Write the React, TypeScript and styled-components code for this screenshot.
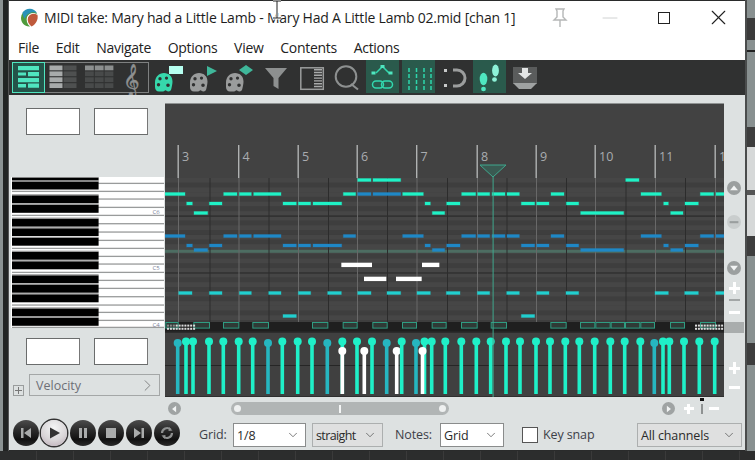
import React from "react";
import styled, { createGlobalStyle } from "styled-components";
import { ChevronDown, ChevronRight, Minus, X } from "lucide-react";

const Global = createGlobalStyle`
  html, body { margin: 0; padding: 0; background: #2a2b2b; }
  * { box-sizing: border-box; }
`;

const UI = `"Open Sans", "Noto Sans", "Liberation Sans", sans-serif`;

const Desktop = styled.div`
  width: 755px; height: 460px; overflow: hidden; position: relative;
  background: #2a2b2b; display: flex; flex-direction: column;
`;
const DesktopRow = styled.div`display: flex; height: 451px;`;
const LeftEdge = styled.div`
  width: 9px;
  background: linear-gradient(90deg, #8b9292 0 3px, #222423 3px 8px, #555 8px);
`;
const RightEdge = styled.div`
  width: 10px; border-left: 2px solid #4a4c4c;
  background: linear-gradient(180deg,
    #889090 0 18px, #3b3b3b 18px 40px, #889090 40px 50px, #222 50px 52px,
    #889090 52px 127px, #3d3d3d 127px 147px, #d6d8d8 147px 190px, #555 190px 195px,
    #d6d8d8 195px 236px, #3d3d3d 236px 256px, #889090 256px 343px,
    #3d3d3d 343px 365px, #889090 365px);
`;
const BottomEdge = styled.div`
  flex: 1;
  background: repeating-linear-gradient(90deg, #2c2d2d 0 36px, #3a3a3a 36px 37px);
`;
const Win = styled.div`
  width: 736px; margin-top: 1px; height: 449px; display: flex; flex-direction: column;
  background: #dde1e1; font-family: ${UI}; color: #222;
`;
const TitleBar = styled.div`
  height: 33px; background: #fff; display: flex; align-items: center;
  padding-left: 11px; font-size: 14px; color: #1d1d1d; flex: none;
`;
const TitleText = styled.span`margin-left: 5px; width: 501px; flex: none; white-space: nowrap; letter-spacing: -0.21px;`;
const WinBtn = styled.div<{ $w: number; $c?: string; $ml?: number }>`
  width: ${p => p.$w}px; flex: none; margin-left: ${p => p.$ml || 0}px;
  display: flex; align-items: center; justify-content: center;
  color: ${p => p.$c || "#222"};
`;
const MaxBox = styled.div`width: 12px; height: 12px; border: 1.4px solid #222;`;
const MenuBar = styled.div`
  height: 26px; background: #fff; display: flex; align-items: center; flex: none;
  padding-left: 9px; font-size: 14px; gap: 16.7px; color: #222; letter-spacing: -0.02em;
`;
const ToolBar = styled.div`
  height: 35px; background: #303131; flex: none; display: flex; align-items: stretch; position: relative;
`;
const ToolSvg = styled.svg`display: block;`;
const Body = styled.div`flex: 1; display: flex; flex-direction: column; padding-top: 8px;`;
const Upper = styled.div`display: flex; height: 294px; flex: none;`;
const LeftCol = styled.div`width: 156px; flex: none; display: flex; flex-direction: column; padding-left: 3px;`;
const BoxRow = styled.div<{ $mt: number }>`
  display: flex; gap: 14px; margin-top: ${p => p.$mt}px; padding-left: 14px;
`;
const WhiteBox = styled.div`
  width: 54px; height: 27px; background: #fff; border: 1px solid #6a6c6c; border-right-color: #777;
`;
const KeysSvg = styled.svg`display: block; margin: 42px 0 0 -1px;`;
const VelRow = styled.div`display: flex; align-items: flex-end; margin-top: 9px; padding-left: 1px;`;
const PlusBox = styled.div`
  width: 11px; height: 11px; border: 1px solid #9a9d9d; position: relative; margin-right: 5px;
  &::before { content: ""; position: absolute; left: 1px; right: 1px; top: 4px; height: 1px; background: #777; }
  &::after { content: ""; position: absolute; top: 1px; bottom: 1px; left: 4px; width: 1px; background: #777; }
`;
const VelSelect = styled.div`
  width: 131px; height: 22px; border: 1px solid #a4a7a7; display: flex; align-items: center;
  justify-content: space-between; padding: 0 2px 0 6px; font-size: 12.5px; color: #6d6f76;
`;
const RollSvg = styled.svg`display: block; flex: none;`;
const Rail = styled.div`width: 21px; flex: none; display: flex; flex-direction: column; align-items: center; padding-right: 1px;`;
const RailCircle = styled.div<{ $mt: number; $light?: boolean }>`
  width: 14px; height: 14px; border-radius: 50%; margin-top: ${p => p.$mt}px;
  background: ${p => (p.$light ? "#c9cdcd" : "#9b9f9f")};
  display: flex; align-items: center; justify-content: center;
`;
const PlusMark = styled.div<{ $mt: number }>`
  width: 11px; height: 12px; margin-top: ${p => p.$mt}px; position: relative;
  &::before { content: ""; position: absolute; left: 0; right: 0; top: 4.5px; height: 3px; background: #fff; }
  &::after { content: ""; position: absolute; top: 0; bottom: 0; left: 4px; width: 3px; background: #fff; }
`;
const DashMark = styled.div<{ $mt: number; $grey?: boolean }>`
  width: 11px; height: ${p => (p.$grey ? 2 : 3)}px; margin-top: ${p => p.$mt}px;
  background: ${p => (p.$grey ? "#a2a6a6" : "#fff")};
`;
const GreyBlock = styled.div<{ $mt: number }>`width: 20px; height: 11px; margin-top: ${p => p.$mt}px; background: #a9adad;`;

const ScrollRow = styled.div`height: 23px; flex: none; display: flex; align-items: center; padding-left: 159px; position: relative;`;
const ScrollBtn = styled.div<{ $ml: number }>`
  width: 13px; height: 13px; border-radius: 50%; background: #9fa3a3; margin-left: ${p => p.$ml}px;
  flex: none; display: flex; align-items: center; justify-content: center;
`;
const Track = styled.div`
  width: 218px; height: 13px; margin-left: 50px; border-radius: 7px; background: #b1b5b5; position: relative; flex: none;
  display: flex; align-items: center; justify-content: space-between; padding: 0 3px;
`;
const TrackDot = styled.span`width: 7px; height: 7px; border-radius: 50%; background: #eef0f0;`;
const TrackThumb = styled.span`width: 2px; height: 8px; background: #f4f6f6; position: absolute; left: 108px; top: 3px;`;
const ZoomPlus = styled.div`
  width: 10px; height: 10px; margin-left: 8.5px; position: relative; flex: none;
  &::before { content: ""; position: absolute; left: 0; right: 0; top: 3.5px; height: 3px; background: #fff; }
  &::after { content: ""; position: absolute; top: 0; bottom: 0; left: 3.5px; width: 3px; background: #fff; }
`;
const ZoomTick = styled.div`width: 2px; height: 10px; background: #8e9292; margin-left: 7px; flex: none; position: relative;
  &::before { content: ""; position: absolute; left: -1px; top: -6px; width: 4px; height: 3px; background: #111; }
`;
const ZoomMinus = styled.div`width: 10px; height: 3px; background: #fff; margin-left: 6px; flex: none;`;

const Controls = styled.div`flex: 1; display: flex; align-items: flex-start; padding: 3px 0 0 4px; font-size: 12.5px; color: #3c4048; position: relative;`;
const Transport = styled.div`display: flex; gap: 2.3px; width: 171px; flex: none; margin-top: -3px;`;
const TBtn = styled.div<{ $on?: boolean }>`
  width: 26px; height: 26px; border-radius: 50%; flex: none; display: flex; align-items: center; justify-content: center;
  background: ${p => p.$on
    ? "radial-gradient(circle at 50% 30%, #f4f5f5 0, #d9d6d8 55%, #b9a8b4 100%)"
    : "linear-gradient(180deg, #4c4c4c 0, #2a2a2a 40%, #111 75%, #2a2a2a 100%)"};
  box-shadow: ${p => (p.$on ? "0 0 0 1.5px #333" : "none")};
`;
const Label = styled.span<{ $ml: number; $w: number }>`
  margin-left: ${p => p.$ml}px; width: ${p => p.$w}px; line-height: 24px; flex: none; white-space: nowrap;
  letter-spacing: -0.01em;
`;
const Select = styled.div<{ $w: number; $ml?: number; $grey?: boolean; $tight?: boolean }>`
  width: ${p => p.$w}px; height: 24px; margin-left: ${p => p.$ml || 0}px; flex: none;
  background: ${p => (p.$grey ? "#dfe0e0" : "#fff")}; border: 1px solid ${p => (p.$grey ? "#acafaf" : "#8a8c8c")};
  display: flex; align-items: center; justify-content: space-between; padding: 0 5px 0 3px;
  font-size: 12.5px; color: #2a2a2a; letter-spacing: ${p => (p.$tight ? "-0.05em" : "-0.01em")};
`;
const Check = styled.div`
  width: 16px; height: 16px; margin: 4px 0 0 18px; background: #fff; border: 1px solid #555; flex: none;
`;
const CursorWrap = styled.svg`position: absolute; left: 271px; top: 0; pointer-events: none;`;

const z4 = (x: number) => 160 + x / 3;
const z5 = (x: number) => 455 + x / 3;
type Seg = [number, number];
const sets = (f: (n: number) => number, list: Seg[]) => list.map(([a, b]) => [f(a), f(b)] as Seg);

const GREEN = "#1ff2c6", BLUE = "#1f88c6", TEAL = "#21cfcf";
const rows: { y: number; c: string; segs: Seg[] }[] = [
  { y: 180, c: GREEN, segs: [...sets(z4, [[593, 633], [639, 722]]), ...sets(z5, [[512, 552]])] },
  { y: 194, c: GREEN, segs: [...sets(z4, [[14, 75], [191, 231], [238, 274], [281, 363], [550, 587], [728, 790]]), ...sets(z5, [[20, 62], [68, 104], [111, 150], [156, 193], [288, 327], [558, 619], [736, 776], [783, 807]])] },
  { y: 194, c: BLUE, segs: sets(z4, [[593, 633], [639, 722]]) },
  { y: 203.5, c: GREEN, segs: [...sets(z4, [[80, 97], [148, 186], [369, 409], [415, 452], [459, 545], [795, 811], [860, 900]]), ...sets(z5, [[199, 239], [245, 282], [334, 371], [626, 640], [690, 730]])] },
  { y: 213, c: GREEN, segs: [...sets(z4, [[102, 143], [817, 854]]), ...sets(z5, [[377, 506], [647, 684]])] },
  { y: 236, c: BLUE, segs: [...sets(z4, [[14, 75], [191, 231], [238, 274], [281, 363], [550, 587], [728, 790]]), ...sets(z5, [[20, 62], [68, 104], [111, 150], [156, 193], [288, 327], [558, 619], [736, 776], [783, 807]])] },
  { y: 245.5, c: BLUE, segs: [...sets(z4, [[80, 97], [148, 186], [369, 409], [415, 452], [459, 545], [795, 811], [860, 900]]), ...sets(z5, [[199, 239], [245, 282], [334, 371], [626, 640], [690, 730]])] },
  { y: 250, c: BLUE, segs: [...sets(z4, [[102, 143], [817, 854]]), ...sets(z5, [[377, 506], [647, 684]])] },
  { y: 293, c: TEAL, segs: [...sets(z4, [[56, 96], [148, 186], [238, 274], [326, 363], [415, 452], [503, 544], [593, 633], [681, 722], [771, 811], [859, 900]]), ...sets(z5, [[67, 104], [155, 193], [245, 282], [333, 371], [600, 640], [689, 730], [782, 807]])] },
  { y: 316, c: TEAL, segs: [...sets(z4, [[369, 409]]), ...sets(z5, [[199, 239]])] },
];
const whites: { y: number; segs: Seg[] }[] = [
  { y: 264.7, segs: sets(z4, [[544, 636], [786, 838]]) },
  { y: 278.7, segs: sets(z4, [[612, 679], [708, 785]]) },
];
const strip: Seg[] = [
  ...sets(z4, [[16, 56], [100, 150], [189, 238], [277, 327], [456, 505], [548, 593], [637, 683], [726, 771], [815, 860]]),
  ...sets(z5, [[18, 68], [107, 156], [286, 335], [375, 421], [421, 467], [467, 510], [510, 556], [556, 600], [645, 690], [735, 783]]),
];
const stems: [number, "g" | "t" | "w"][] = [
  [177.7, "t"], [186, "g"], [193, "g"], [209, "g"], [223.3, "g"], [238.7, "g"], [252.7, "g"], [268, "t"], [282.3, "g"], [297.7, "g"], [312, "g"], [327.3, "t"],
  [342.3, "g"], [342.3, "w"], [357, "g"], [364.3, "w"], [372, "g"], [386.7, "t"], [396.7, "w"], [401.7, "g"], [416, "t"], [424.5, "g"], [422.5, "w"], [431.7, "g"],
  [445.3, "g"], [461.3, "g"], [476.3, "g"], [490.7, "g"], [506, "g"], [520, "g"], [536, "g"], [550, "g"], [565.3, "g"], [579.3, "g"], [594.7, "g"], [610.3, "g"],
  [624.7, "g"], [640.3, "g"], [654.3, "t"], [663, "g"], [669.3, "g"], [684, "g"], [699.3, "g"], [714.7, "g"],
];
const barX = [178, 238.5, 298, 357, 416.5, 477, 536, 595, 655, 715];
const beatX = [209.5, 268.5, 328, 387, 447, 506.5, 566, 625.5, 685];
const barNames = ["3", "4", "5", "6", "7", "8", "9", "10", "11", "12"];

function PianoRoll() {
  const rowH = 4.74;
  const bands = [] as React.ReactNode[];
  const blackPos = [1, 3, 6, 8, 10];
  for (let i = 0; i < 31; i++) {
    const y = 178 + i * rowH;
    const semi = ((8 - i - 1) % 12 + 12) % 12; // C at row just above the octave line
    bands.push(<rect key={i} x={165} y={y} width={559} height={rowH} fill={blackPos.includes(semi) ? "#3e3e3e" : "#464646"} />);
  }
  return (
    <RollSvg width={559} height={294} viewBox="165 103 559 294">
      <rect x={165} y={103} width={559} height={294} fill="#424242" />
      <rect x={165} y={103} width={559} height={1} fill="#8f9292" />
      {bands}
      <rect x={165} y={215.6} width={559} height={1} fill="#272727" />
      <rect x={165} y={272.5} width={559} height={1} fill="#272727" />
      <rect x={165} y={249.8} width={559} height={3} fill="#4d6d62" />
      {beatX.map(x => <rect key={x} x={x} y={178} width={1} height={144} fill="#2c2c2c" />)}
      {barX.map(x => <rect key={x} x={x} y={178} width={1} height={144} fill="#686868" />)}
      {barX.map((x, i) => (
        <g key={x}>
          <rect x={x - 0.5} y={145} width={1.4} height={33} fill="#b0b2b2" />
          <text x={x + 4} y={160.5} fontFamily={UI} fontSize={12.5} fill="#a9acb0">{barNames[i]}</text>
        </g>
      ))}
      {rows.map((r, i) => r.segs.map(([a, b]) => (
        <rect key={`${i}-${a}`} x={a} y={r.y - 1.5} width={b - a} height={3} fill={r.c} stroke={r.c} strokeOpacity={0.3} strokeWidth={1} />
      )))}
      {whites.map(r => r.segs.map(([a, b]) => (
        <rect key={`${r.y}-${a}`} x={a} y={r.y - 2} width={b - a} height={4.4} fill="#fff" />
      )))}
      <rect x={165} y={322} width={559} height={11} fill="#1f1f1f" />
      <rect x={165} y={331.5} width={559} height={1.5} fill="#2c2c2c" />
      {strip.map(([a, b]) => (
        <rect key={a} x={a + 0.5} y={322.5} width={b - a - 1} height={5.6} fill="#2f3a36" stroke="#2f9c82" strokeWidth={1} />
      ))}
      {[0, 1].map(r => Array.from({ length: 10 }).map((_, i) => (
        <React.Fragment key={`${r}-${i}`}>
          <rect x={167 + i * 2.9} y={324.6 + r * 3.2} width={2} height={2} fill={i < 3 && r === 0 ? "#888" : "#ddd"} />
          <rect x={695 + i * 2.9} y={324.6 + r * 3.2} width={2} height={2} fill="#ddd" />
        </React.Fragment>
      )))}
      <rect x={165} y={333} width={559} height={63} fill="#404040" />
      <rect x={165} y={365} width={559} height={1} fill="#262626" />
      <rect x={165} y={396} width={559} height={1.2} fill="#2f2f2f" />
      {stems.map(([x, k], i) => {
        const color = k === "g" ? "#1ff0c8" : k === "t" ? "#26b6c0" : "#ffffff";
        const top = k === "g" ? 341.5 : k === "t" ? 343 : 351;
        return (
          <g key={i}>
            <rect x={x - 1.8} y={top} width={3.6} height={394 - top} fill={color} />
            <circle cx={x} cy={top} r={4} fill={color} />
          </g>
        );
      })}
      <path d="M480 165 H506 L493 177 Z" fill="#3a5a52" stroke="#3fa78d" strokeWidth={1} />
      <rect x={492.6} y={177} width={1} height={220} fill="#3fa78d" />
    </RollSvg>
  );
}

function Keyboard() {
  const lines = [250, 274, 297, 322, 346, 371, 396, 421, 445, 469, 492, 517, 541, 565, 590, 615, 637, 661, 682].map(v => 100 + v / 3);
  const blacks: Seg[] = [[177.5, 180.5], [181.5, 189.5], [195.3, 203.3], [204.8, 212.8], [218.6, 226.6], [228.3, 236], [237.7, 245.7], [251.7, 259.7], [261.3, 269.3], [275.3, 283.3], [285, 292.7], [294.3, 302.3], [308.4, 316.4], [317.8, 325.8]];
  return (
    <KeysSvg width={153} height={152} viewBox="11 177 153 152">
      <rect x={11} y={177} width={153} height={151} fill="#fff" />
      {lines.map(y => <rect key={y} x={12} y={y - 0.6} width={152} height={1.3} fill="#999b9b" />)}
      {blacks.map(([a, b]) => <rect key={a} x={12} y={a} width={86.6} height={b - a} fill="#000" />)}
      {blacks.map(([a]) => <rect key={`e${a}`} x={12} y={a - 1} width={86.6} height={1} fill="#8a8a8a" />)}
      <text x={152.5} y={213.5} fontFamily={UI} fontSize={6} fill="#7b7f99">C6</text>
      <text x={152.5} y={270} fontFamily={UI} fontSize={6} fill="#7b7f99">C5</text>
      <text x={152.5} y={326.5} fontFamily={UI} fontSize={6} fill="#7b7f99">C4</text>
    </KeysSvg>
  );
}

const MINT = "#4fe6c0";
const palette = (fill: string) => (
  <path fillRule="evenodd" d="M0 9.5C0 4 4 0 9 0c5 0 8.5 3.5 8.5 8.5 0 2.5-.6 4.5-1.2 7.5-.3 1.5-1.3 2.5-2.8 2.5-1.8 0-2-1-2.8-1.2-1-.2-1 1.2-2.7 1.2H4c-2.5 0-4-2-4-4.5zM5 4a1.7 1.7 0 100 3.4A1.7 1.7 0 005 4zm6.5-.5a1.6 1.6 0 100 3.2 1.6 1.6 0 000-3.2zM3.5 10a1.7 1.7 0 100 3.4 1.7 1.7 0 000-3.4zm9.5.5a1.8 1.8 0 100 3.6 1.8 1.8 0 000-3.6z" fill={fill} />
);

function Toolbar() {
  const grid = (x0: number, cols: number, first: boolean) => {
    const out = [] as React.ReactNode[];
    const cw = cols === 2 ? 13 : 8.8;
    for (let r = 0; r < 4; r++) for (let c = 0; c < cols; c++) {
      const on = cols === 2 ? c === 0 : r === 0;
      out.push(<rect key={`${x0}-${r}-${c}`} x={x0 + c * (cw + 1)} y={65.5 + r * 5.9} width={cw} height={4.8} fill={on ? (cols === 2 ? "#a8abab" : "#8c8f8f") : (first ? "#4e5050" : "#484a4a")} />);
    }
    return out;
  };
  return (
    <ToolSvg width={736} height={35} viewBox="9 60 736 35">
      <rect x={12.5} y={62.5} width={136} height={30} fill="none" stroke="#7e8080" />
      <rect x={12.5} y={62.5} width={32} height={30} fill="#24544a" stroke={MINT} />
      <path d="M18 66h21v4.3H18zM28 72h11v4.3H28zM18 72.5h8v3H18zM18 78h21v4.3H18zM28 83.5h11v4.3H28zM18 84h8v3.6H18z" fill={MINT} />
      {grid(49.5, 2, true)}
      {grid(85, 3, false)}
      <text x={122.5} y={89} fontFamily='"DejaVu Sans", sans-serif' fontSize={28} fill="#8f9191" stroke="#8f9191" strokeWidth={0.4}>𝄞</text>
      <g transform="translate(155 73)">{palette("#36d8ac")}</g>
      <rect x={169} y={66} width={14} height={8} fill="#b6fff0" />
      <g transform="translate(190 73)">{palette("#9a9c9c")}</g>
      <path d="M207 66l10 5-10 5z" fill="#3fb79a" />
      <g transform="translate(226 73)">{palette("#9a9c9c")}</g>
      <path d="M246 65l7 5-7 5-7-5z" fill="#3fb79a" />
      <path d="M265 68h22l-8.5 10v11l-5-3v-8z" fill="#8d9090" />
      <rect x={300.8} y={67.8} width={22.5} height={21.5} fill="none" stroke="#9a9c9c" strokeWidth={1.5} />
      <path d="M314 69h8v1.4h-8zM314 71.8h8v1.4h-8zM314 74.6h8V76h-8zM314 77.4h8v1.4h-8zM314 80.2h8v1.4h-8zM314 83h8v1.4h-8zM314 85.8h8v1.4h-8z" fill="#a9abab" />
      <circle cx={346} cy={76.5} r={10.3} fill="none" stroke="#8d9090" strokeWidth={2} />
      <path d="M351 84l7 5.5" stroke="#8d9090" strokeWidth={2} fill="none" />
      <rect x={366} y={60} width={33} height={33} fill="#2a5a4c" />
      <path d="M376 73l6.5-6.5 6.5 6.5" fill="none" stroke="#32d8ae" strokeWidth={1.5} />
      <rect x={371.5} y={71.5} width={4} height={3} fill={MINT} />
      <rect x={388.5} y={71.5} width={4} height={3} fill={MINT} />
      <rect x={380.5} y={65} width={4} height={3} fill={MINT} />
      <rect x={372.5} y={81} width={11} height={7} rx={3.5} fill="none" stroke="#32d8ae" strokeWidth={1.5} />
      <rect x={381.5} y={81} width={11} height={7} rx={3.5} fill="none" stroke="#32d8ae" strokeWidth={1.5} />
      <rect x={402} y={60} width={33} height={33} fill="#2a5a4c" />
      {[409, 416.5, 424, 431].map(x => [68, 74, 80, 86].map(y => <rect key={`${x}${y}`} x={x - 0.75} y={y} width={1.5} height={4} fill="#2ed6ac" />))}
      <path d="M453 70h4a8 8 0 010 16h-4" fill="none" stroke="#9b9d9d" strokeWidth={3} />
      <rect x={444} y={69} width={3} height={3} fill="#c8caca" />
      <rect x={444} y={84} width={3} height={3} fill="#c8caca" />
      <rect x={473} y={60} width={33} height={33} fill="#2a5a4c" />
      <ellipse cx={483.5} cy={79} rx={3.8} ry={6.2} fill={MINT} />
      <ellipse cx={483.5} cy={89} rx={2.4} ry={2.3} fill={MINT} />
      <ellipse cx={495.5} cy={70.5} rx={3.4} ry={6} fill="#8ef2d8" />
      <ellipse cx={494.5} cy={79.5} rx={2.4} ry={2.3} fill="#8ef2d8" />
      <rect x={513} y={67} width={24} height={17} fill="#5a5c5c" />
      <path d="M522 68h6v5h4l-7 6-7-6h4z" fill="#e3e5e5" />
      <path d="M513 83h24l-6 6h-12z" fill="#9fa2a2" />
    </ToolSvg>
  );
}

const Glyph = styled.svg`display: block;`;
const TIcon = ({ d, c = "#a9abab" }: { d: string; c?: string }) => (
  <Glyph width={16} height={16} viewBox="0 0 16 16"><path d={d} fill={c} /></Glyph>
);

function Logo() {
  return (
    <Glyph width={19} height={20} viewBox="0 0 19 20">
      <path d="M1 10A8.5 8.5 0 0 1 9 1.5c4 0 7 2 8.5 5C14 4 9 4.5 7 9c-1 3 0 7 3 9.5C5 19 1 15 1 10z" fill="#4f9a3c" />
      <path d="M2.5 4.5A8.5 8.5 0 0 1 17 5c-2-1-5-1.5-8 .5C6 7 5.5 9 5 11 3.5 9 2.5 7 2.5 4.5z" fill="#2a92b8" />
      <path d="M8 9.5c2-4 6-4.5 9.5-2.5.8 4-1 9-6 11.5C8.5 16 7 13 8 9.5z" fill="#bf5a3c" />
    </Glyph>
  );
}

export default function App() {
  return (
    <>
      <Global />
      <Desktop>
        <DesktopRow>
          <LeftEdge />
          <Win>
            <TitleBar>
              <Logo />
              <TitleText>MIDI take: Mary had a Little Lamb - Mary Had A Little Lamb 02.mid [chan 1]</TitleText>
              <WinBtn $w={30}>
                <Glyph width={20} height={22} viewBox="0 0 20 22">
                  <path d="M6 2h8l-1 2v6l3 3H4l3-3V4zM10 13v7" fill="none" stroke="#b5b7b7" strokeWidth={1.4} />
                </Glyph>
              </WinBtn>
              <WinBtn $w={70} $c="#d0d2d2"><Minus size={24} strokeWidth={1} /></WinBtn>
              <WinBtn $w={38}><MaxBox /></WinBtn>
              <WinBtn $w={44} $ml={13}><X size={25} strokeWidth={1.1} /></WinBtn>
            </TitleBar>
            <MenuBar>
              <span>File</span><span>Edit</span><span>Navigate</span><span>Options</span><span>View</span><span>Contents</span><span>Actions</span>
            </MenuBar>
            <ToolBar><Toolbar /></ToolBar>
            <Body>
              <Upper>
                <LeftCol>
                  <BoxRow $mt={5}><WhiteBox /><WhiteBox /></BoxRow>
                  <Keyboard />
                  <BoxRow $mt={9}><WhiteBox /><WhiteBox /></BoxRow>
                  <VelRow>
                    <PlusBox />
                    <VelSelect>Velocity<ChevronRight size={19} color="#7d7f7f" strokeWidth={1.2} /></VelSelect>
                  </VelRow>
                </LeftCol>
                <PianoRoll />
                <Rail>
                  <RailCircle $mt={78}><TIcon d="M3.5 10.5L8 5l4.5 5.5z" c="#f2f4f4" /></RailCircle>
                  <RailCircle $mt={20} $light><TIcon d="M3 7h10v2.4H3z" c="#9a9e9e" /></RailCircle>
                  <RailCircle $mt={32}><TIcon d="M3.5 5.5L8 11l4.5-5.5z" c="#f2f4f4" /></RailCircle>
                  <PlusMark $mt={7} />
                  <DashMark $mt={5} $grey />
                  <DashMark $mt={10} />
                  <GreyBlock $mt={8} />
                  <PlusMark $mt={29} />
                  <DashMark $mt={12} />
                </Rail>
              </Upper>
              <ScrollRow>
                <ScrollBtn $ml={0}><TIcon d="M10 4v8L5 8z" c="#f2f4f4" /></ScrollBtn>
                <Track><TrackDot /><TrackThumb /><TrackDot /></Track>
                <ScrollBtn $ml={213}><TIcon d="M6 4v8l5-4z" c="#f2f4f4" /></ScrollBtn>
                <ZoomPlus />
                <ZoomTick />
                <ZoomMinus />
              </ScrollRow>
              <Controls>
                <Transport>
                  <TBtn><TIcon d="M3 3h2.5v10H3zM13 3v10L6 8z" /></TBtn>
                  <TBtn $on><TIcon d="M4 2.5L14 8 4 13.5z" c="#333" /></TBtn>
                  <TBtn><TIcon d="M4 3h3v10H4zM9 3h3v10H9z" /></TBtn>
                  <TBtn><TIcon d="M3 3h10v10H3z" /></TBtn>
                  <TBtn><TIcon d="M3 3v10l7-5zM10.5 3H13v10h-2.5z" /></TBtn>
                  <TBtn><Glyph width={16} height={16} viewBox="0 0 16 16"><path d="M3 8a5 5 0 0 1 8.5-3.5M13 8a5 5 0 0 1-8.5 3.5" fill="none" stroke="#8e9090" strokeWidth={2.2} /><path d="M10 2l3.5 3.5L9.5 6zM6 14l-3.5-3.5L6.5 10z" fill="#8e9090" /></Glyph></TBtn>
                </Transport>
                <Label $ml={15} $w={34}>Grid:</Label>
                <Select $w={73}>1/8<ChevronDown size={14} color="#555" strokeWidth={1.3} /></Select>
                <Select $w={71} $ml={6} $grey $tight>straight<ChevronDown size={14} color="#555" strokeWidth={1.3} /></Select>
                <Label $ml={12} $w={45}>Notes:</Label>
                <Select $w={64}>Grid<ChevronDown size={14} color="#555" strokeWidth={1.3} /></Select>
                <Check />
                <Label $ml={5} $w={94}>Key snap</Label>
                <Select $w={105} $grey>All channels<ChevronDown size={14} color="#555" strokeWidth={1.3} /></Select>
              </Controls>
            </Body>
          </Win>
          <RightEdge />
        </DesktopRow>
        <BottomEdge />
        <CursorWrap width={12} height={22} viewBox="0 0 12 22">
          <path d="M2 1h8M2 18h8M6 1v17" stroke="#fff" strokeWidth={3} fill="none" />
          <path d="M2 1h8M2 18h8M6 1v17" stroke="#222" strokeWidth={1} fill="none" />
        </CursorWrap>
      </Desktop>
    </>
  );
}
